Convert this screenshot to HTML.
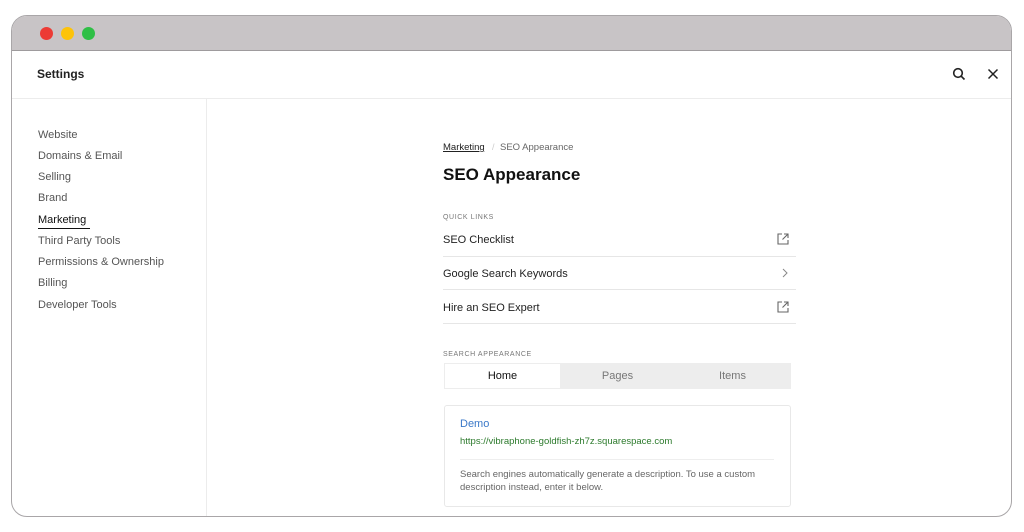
<!DOCTYPE html>
<html><head><style>
body{margin:0;width:1024px;height:532px;background:#fff;font-family:"Liberation Sans",sans-serif;position:relative;overflow:hidden}
.win{position:absolute;left:11px;top:15px;width:999px;height:500px;border:1px solid #a9a6a8;border-radius:16px;overflow:hidden;background:#fff}
.bar{position:absolute;left:0;top:0;right:0;height:34px;background:#c8c4c6;border-bottom:1px solid #9e9b9d}
.dot{position:absolute;top:11px;width:13px;height:13px;border-radius:50%}
.a{position:absolute;white-space:nowrap}
.side{position:absolute;left:26px;font-size:11px;color:#555}
.row{position:absolute;left:431px;width:353px;border-bottom:1px solid #e6e6e6}
</style></head><body>
<div class="win">
<div class="bar"></div>
<div class="dot" style="left:28px;background:#ec3b35"></div>
<div class="dot" style="left:49px;background:#fdc30a"></div>
<div class="dot" style="left:70px;background:#2fbf46"></div>
<div class="a" style="left:25px;top:51px;font-size:12px;font-weight:bold;color:#222">Settings</div>
<svg class="a" style="left:940px;top:51px" width="14" height="14" viewBox="0 0 14 14"><circle cx="6" cy="6" r="4.3" fill="none" stroke="#222" stroke-width="1.6"/><path d="M9.2 9.2L12.5 12.5" stroke="#222" stroke-width="1.6"/></svg>
<svg class="a" style="left:975px;top:52px" width="12" height="12" viewBox="0 0 12 12"><path d="M1.5 1.5L10.5 10.5M10.5 1.5L1.5 10.5" stroke="#222" stroke-width="1.5"/></svg>
<div class="a" style="left:0;right:0;top:82px;border-top:1px solid #ececec"></div>
<div class="a" style="left:194px;top:83px;bottom:0;border-left:1px solid #ececec"></div>
<div class="side" style="top:113px">Website</div>
<div class="side" style="top:134px">Domains &amp; Email</div>
<div class="side" style="top:155px">Selling</div>
<div class="side" style="top:176px">Brand</div>
<div class="side" style="top:198px;color:#111">Marketing</div>
<div class="a" style="left:26px;top:212px;width:52px;border-top:1.5px solid #111"></div>
<div class="side" style="top:219px">Third Party Tools</div>
<div class="side" style="top:240px">Permissions &amp; Ownership</div>
<div class="side" style="top:261px">Billing</div>
<div class="side" style="top:283px">Developer Tools</div>

<div class="a" style="left:431px;top:126px;font-size:9.5px;color:#222;text-decoration:underline">Marketing</div>
<div class="a" style="left:480px;top:126px;font-size:9px;color:#ccc">/</div>
<div class="a" style="left:488px;top:126px;font-size:9.5px;color:#666">SEO Appearance</div>
<div class="a" style="left:431px;top:149px;font-size:17px;font-weight:bold;color:#111">SEO Appearance</div>
<div class="a" style="left:431px;top:198px;font-size:7px;letter-spacing:.6px;color:#777">QUICK LINKS</div>
<div class="row" style="top:205px;height:35px"></div>
<div class="a" style="left:431px;top:218px;font-size:11px;color:#222">SEO Checklist</div>
<div class="row" style="top:240px;height:33px"></div>
<div class="a" style="left:431px;top:252px;font-size:11px;color:#222">Google Search Keywords</div>
<div class="row" style="top:274px;height:33px"></div>
<div class="a" style="left:431px;top:286px;font-size:11px;color:#222">Hire an SEO Expert</div>
<svg class="a" style="left:765px;top:217px" width="12" height="12" viewBox="0 0 12 12"><path d="M5 1H1V11H11V7M7 1H11V5M11 1L5.5 6.5" fill="none" stroke="#666" stroke-width="1.1"/></svg>
<svg class="a" style="left:765px;top:285px" width="12" height="12" viewBox="0 0 12 12"><path d="M5 1H1V11H11V7M7 1H11V5M11 1L5.5 6.5" fill="none" stroke="#666" stroke-width="1.1"/></svg>
<svg class="a" style="left:770px;top:252px" width="6" height="10" viewBox="0 0 6 10"><path d="M1 1L5 5L1 9" fill="none" stroke="#888" stroke-width="1"/></svg>
<div class="a" style="left:431px;top:335px;font-size:7px;letter-spacing:.6px;color:#777">SEARCH APPEARANCE</div>
<div class="a" style="left:432px;top:347px;width:347px;height:26px;background:#ededed"></div>
<div class="a" style="left:433px;top:348px;width:115px;height:24px;background:#fff;font-size:11px;color:#111;text-align:center;line-height:24px">Home</div>
<div class="a" style="left:548px;top:348px;width:115px;height:24px;font-size:11px;color:#777;text-align:center;line-height:24px">Pages</div>
<div class="a" style="left:663px;top:348px;width:115px;height:24px;font-size:11px;color:#777;text-align:center;line-height:24px">Items</div>
<div class="a" style="left:432px;top:389px;width:345px;height:100px;border:1px solid #e8e8e8;border-radius:3px"></div>
<div class="a" style="left:448px;top:402px;font-size:11px;color:#3a78c8">Demo</div>
<div class="a" style="left:448px;top:420px;font-size:9.5px;color:#2c7a2c">https://vibraphone-goldfish-zh7z.squarespace.com</div>
<div class="a" style="left:448px;top:443px;width:314px;border-top:1px solid #eee"></div>
<div class="a" style="left:448px;top:452px;font-size:9.5px;color:#666;line-height:13px">Search engines automatically generate a description. To use a custom<br>description instead, enter it below.</div>
</div>
</body></html>
